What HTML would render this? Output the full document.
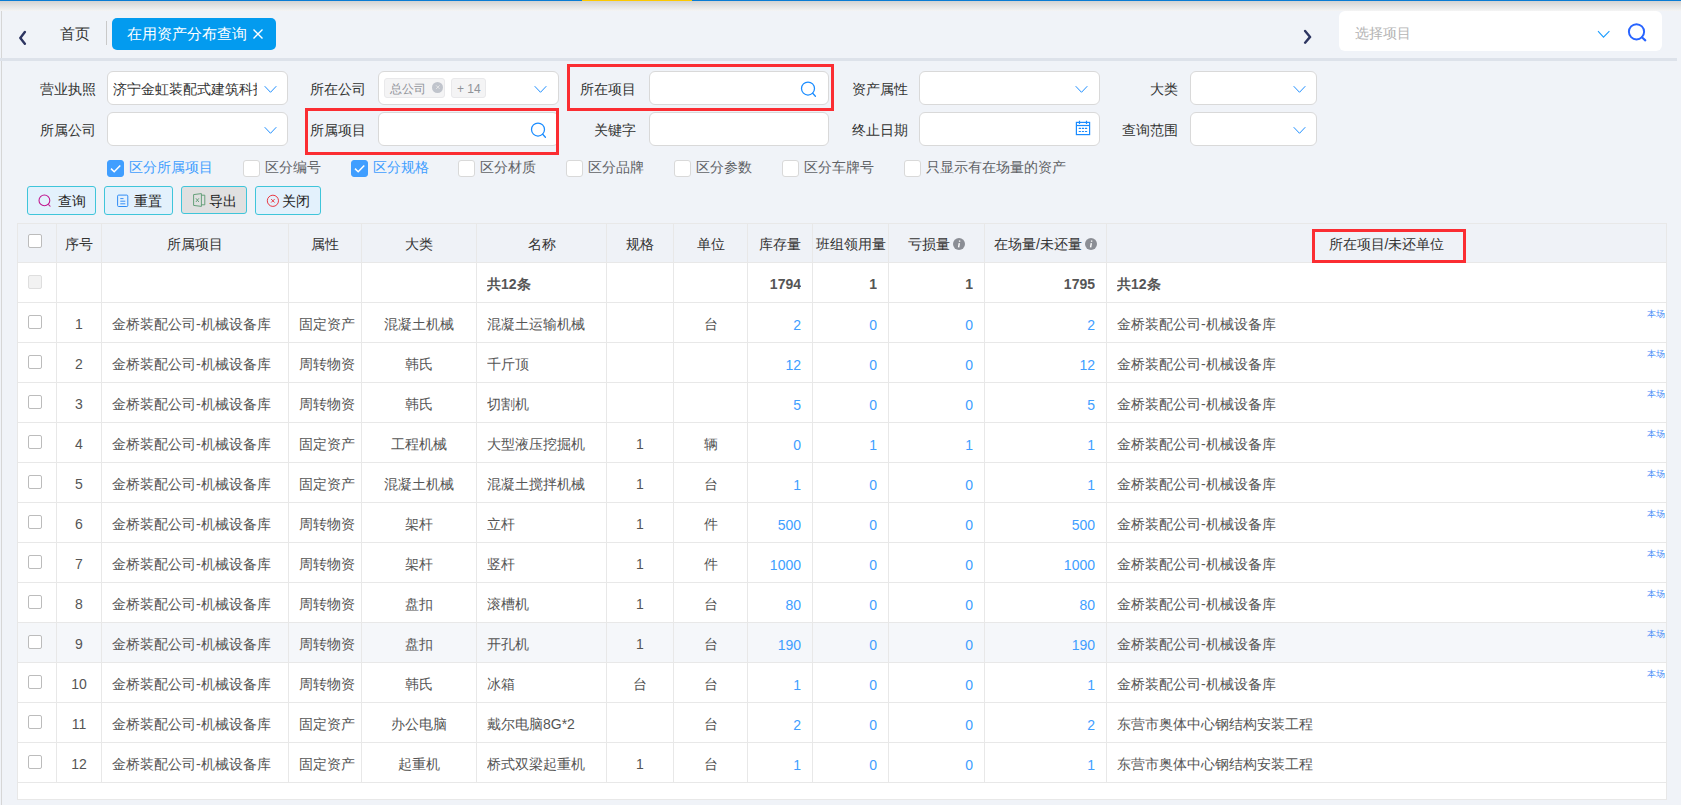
<!DOCTYPE html><html><head><meta charset="utf-8"><style>
*{box-sizing:border-box;margin:0;padding:0}
html,body{width:1681px;height:805px;overflow:hidden;background:#f0f3f8;font-family:"Liberation Sans",sans-serif;font-size:14px;color:#333}
.abs{position:absolute}
.lbl{position:absolute;height:34px;line-height:36px;text-align:right;color:#333;font-size:14px;white-space:nowrap}
.inp{position:absolute;height:34px;background:#fff;border:1px solid #d9d9d9;border-radius:6px}
.chev{position:absolute;width:13px;height:8px}
.cb{position:absolute;width:17px;height:17px;border:1px solid #d9d9d9;border-radius:3px;background:#fff}
.cbon{background:#409eff;border-color:#409eff}
.cbt{position:absolute;font-size:14px;line-height:16px;color:#606266;white-space:nowrap}
.btn{position:absolute;height:29px;border:1px solid #3fc5da;border-radius:3px;background:#e3f1fc;font-size:14px;line-height:27px;color:#333;white-space:nowrap}
.vl{position:absolute;width:1px;background:#e8e8e8}
.hl{position:absolute;height:1px;background:#e8e8e8}
.c{position:absolute;height:40px;line-height:44px;font-size:14px;color:#555;white-space:nowrap;overflow:hidden}
.ct{text-align:center}
.cr{text-align:right}
.cl{text-align:left}
.num{color:#409eff;padding-top:1px}
.tcb{position:absolute;width:14px;height:14px;border:1px solid #bcbcbc;border-radius:2px;background:#fff}
.bc{position:absolute;font-size:9px;line-height:10px;color:#4a8cf7;white-space:nowrap}
.red{position:absolute;border:3px solid #fb2d32}
</style></head><body>
<div class="abs" style="left:0;top:0;width:1681px;height:1px;background:#0a7bd3"></div>
<div class="abs" style="left:582px;top:0;width:110px;height:1px;background:#fcc800"></div>
<div class="abs" style="left:0;top:1px;width:1681px;height:10px;background:linear-gradient(#d3d3d3,#f4f4f4)"></div>
<div class="abs" style="left:1px;top:11px;width:1px;height:794px;background:#d6d6d6"></div>
<div class="abs" style="left:0;top:58px;width:1677px;height:3px;background:#dde2ea"></div>
<svg class="abs" style="left:17px;top:29px" width="12" height="16" viewBox="0 0 12 16"><path d="M7.85 2.9 L3.3 8.9 L7.85 14.7" fill="none" stroke="#2d3561" stroke-width="2.4" stroke-linecap="round" stroke-linejoin="round"/></svg>
<div class="abs" style="left:59.5px;top:23.5px;font-size:14.6px;line-height:20px;color:#333">首页</div>
<div class="abs" style="left:106px;top:21px;width:1px;height:24px;background:#c9c9c9"></div>
<div class="abs" style="left:112px;top:18px;width:164px;height:32px;background:#039bef;border-radius:5px"></div>
<div class="abs" style="left:127px;top:24px;font-size:15px;line-height:20px;color:#fff">在用资产分布查询</div>
<svg class="abs" style="left:252px;top:28px" width="12" height="12" viewBox="0 0 12 12"><path d="M1.5 1.5 L10.5 10.5 M10.5 1.5 L1.5 10.5" stroke="#fff" stroke-width="1.4"/></svg>
<svg class="abs" style="left:1300px;top:28px" width="12" height="16" viewBox="0 0 12 16"><path d="M5.1 2.9 L10.1 8.9 L5.1 14.7" fill="none" stroke="#2d3561" stroke-width="2.4" stroke-linecap="round" stroke-linejoin="round"/></svg>
<div class="abs" style="left:1339px;top:11px;width:323px;height:40px;background:#fff;border-radius:6px"></div>
<div class="abs" style="left:1355px;top:23px;font-size:14px;line-height:20px;color:#b4b4b4">选择项目</div>
<svg class="abs" style="left:1597px;top:29px" width="14" height="10" viewBox="0 0 14 10"><path d="M1 2.2 L6.5 8.2 L12.4 2.2" fill="none" stroke="#1a9cff" stroke-width="1.05"/></svg>
<svg class="abs" style="left:1626px;top:22px" width="22" height="22" viewBox="0 0 22 22"><circle cx="10.5" cy="9.8" r="7.6" fill="none" stroke="#2864ff" stroke-width="1.95"/><path d="M15.9 15.3 L19.3 18.4" stroke="#2864ff" stroke-width="2.1" stroke-linecap="round"/></svg>
<div class="lbl" style="left:-24px;top:71px;width:120px">营业执照</div>
<div class="lbl" style="left:246px;top:71px;width:120px">所在公司</div>
<div class="lbl" style="left:516px;top:71px;width:120px">所在项目</div>
<div class="lbl" style="left:788px;top:71px;width:120px">资产属性</div>
<div class="lbl" style="left:1058px;top:71px;width:120px">大类</div>
<div class="lbl" style="left:-24px;top:112px;width:120px">所属公司</div>
<div class="lbl" style="left:246px;top:112px;width:120px">所属项目</div>
<div class="lbl" style="left:516px;top:112px;width:120px">关键字</div>
<div class="lbl" style="left:788px;top:112px;width:120px">终止日期</div>
<div class="lbl" style="left:1058px;top:112px;width:120px">查询范围</div>
<div class="inp" style="left:107px;top:71px;width:181px"></div>
<div class="inp" style="left:378px;top:71px;width:181px"></div>
<div class="inp" style="left:649px;top:71px;width:180px"></div>
<div class="inp" style="left:919px;top:71px;width:181px"></div>
<div class="inp" style="left:1190px;top:71px;width:127px"></div>
<div class="inp" style="left:107px;top:112px;width:181px"></div>
<div class="inp" style="left:378px;top:112px;width:181px"></div>
<div class="inp" style="left:649px;top:112px;width:180px"></div>
<div class="inp" style="left:919px;top:112px;width:181px"></div>
<div class="inp" style="left:1190px;top:112px;width:127px"></div>
<div class="abs" style="left:113px;top:71px;width:144px;height:34px;line-height:36px;overflow:hidden;white-space:nowrap;color:#333">济宁金虹装配式建筑科技有限公司</div>
<svg class="abs" style="left:264px;top:85px" width="14" height="10" viewBox="0 0 14 10"><path d="M0.7 1.2 L6.5 7.3 L12.3 1.2" fill="none" stroke="#1f8fff" stroke-width="1.0"/></svg>
<svg class="abs" style="left:534px;top:85px" width="14" height="10" viewBox="0 0 14 10"><path d="M0.7 1.2 L6.5 7.3 L12.3 1.2" fill="none" stroke="#1f8fff" stroke-width="1.0"/></svg>
<svg class="abs" style="left:1075px;top:85px" width="14" height="10" viewBox="0 0 14 10"><path d="M0.7 1.2 L6.5 7.3 L12.3 1.2" fill="none" stroke="#1f8fff" stroke-width="1.0"/></svg>
<svg class="abs" style="left:1293px;top:85px" width="14" height="10" viewBox="0 0 14 10"><path d="M0.7 1.2 L6.5 7.3 L12.3 1.2" fill="none" stroke="#1f8fff" stroke-width="1.0"/></svg>
<svg class="abs" style="left:264px;top:126px" width="14" height="10" viewBox="0 0 14 10"><path d="M0.7 1.2 L6.5 7.3 L12.3 1.2" fill="none" stroke="#1f8fff" stroke-width="1.0"/></svg>
<svg class="abs" style="left:1293px;top:126px" width="14" height="10" viewBox="0 0 14 10"><path d="M0.7 1.2 L6.5 7.3 L12.3 1.2" fill="none" stroke="#1f8fff" stroke-width="1.0"/></svg>
<div class="abs" style="left:384px;top:78px;width:61px;height:20px;background:#f4f4f5;border:1px solid #e9e9eb;border-radius:3px"></div>
<div class="abs" style="left:390px;top:80px;font-size:12px;line-height:18px;color:#909399">总公司</div>
<div class="abs" style="left:432.3px;top:81.6px;width:11px;height:11px;border-radius:50%;background:#c0c4cc"></div>
<svg class="abs" style="left:432px;top:81px" width="12" height="12" viewBox="0 0 12 12"><path d="M4.1 4.4 L7.6 7.9 M7.6 4.4 L4.1 7.9" stroke="#eeeeee" stroke-width="0.8"/></svg>
<div class="abs" style="left:451px;top:78px;width:35px;height:20px;background:#f4f4f5;border:1px solid #e9e9eb;border-radius:3px"></div>
<div class="abs" style="left:457px;top:80px;font-size:12px;line-height:18px;color:#909399">+ 14</div>
<svg class="abs" style="left:530px;top:122px" width="18" height="18" viewBox="0 0 18 18"><circle cx="8" cy="7.5" r="6.5" fill="none" stroke="#1a8cff" stroke-width="1.25"/><path d="M12.7 12.3 L15.4 15.2" stroke="#1a8cff" stroke-width="1.3" stroke-linecap="round"/></svg>
<svg class="abs" style="left:800px;top:81px" width="18" height="18" viewBox="0 0 18 18"><circle cx="8" cy="7.5" r="6.5" fill="none" stroke="#1a8cff" stroke-width="1.25"/><path d="M12.7 12.3 L15.4 15.2" stroke="#1a8cff" stroke-width="1.3" stroke-linecap="round"/></svg>
<svg class="abs" style="left:1075px;top:120px" width="16" height="16" viewBox="0 0 16 16"><rect x="1.4" y="2.4" width="13.2" height="12.2" fill="none" stroke="#1a8cff" stroke-width="1.2"/><path d="M1.4 5.5 H14.6" stroke="#1a8cff" stroke-width="1.2"/><path d="M4.5 0.8 V4 M11.5 0.8 V4" stroke="#1a8cff" stroke-width="1.2"/><path d="M4.2 8.4 H5.5 M7.3 8.4 H8.6 M10.4 8.4 H11.7 M4.2 11.5 H5.5 M7.3 11.5 H8.6 M10.4 11.5 H11.7" stroke="#1a8cff" stroke-width="1.1" stroke-linecap="round"/></svg>
<div class="red" style="left:567px;top:64px;width:267px;height:47px"></div>
<div class="red" style="left:305px;top:108px;width:254px;height:47px"></div>
<div class="cb cbon" style="left:107px;top:160px"></div>
<svg class="abs" style="left:107px;top:160px" width="17" height="17" viewBox="0 0 17 17"><path d="M4 8.6 L7.2 11.8 L13.3 5.5" fill="none" stroke="#fff" stroke-width="1.5"/></svg>
<div class="cbt" style="left:129px;top:159px;color:#409eff">区分所属项目</div>
<div class="cb" style="left:243px;top:160px"></div>
<div class="cbt" style="left:265px;top:159px;color:#606266">区分编号</div>
<div class="cb cbon" style="left:351px;top:160px"></div>
<svg class="abs" style="left:351px;top:160px" width="17" height="17" viewBox="0 0 17 17"><path d="M4 8.6 L7.2 11.8 L13.3 5.5" fill="none" stroke="#fff" stroke-width="1.5"/></svg>
<div class="cbt" style="left:373px;top:159px;color:#409eff">区分规格</div>
<div class="cb" style="left:458px;top:160px"></div>
<div class="cbt" style="left:480px;top:159px;color:#606266">区分材质</div>
<div class="cb" style="left:566px;top:160px"></div>
<div class="cbt" style="left:588px;top:159px;color:#606266">区分品牌</div>
<div class="cb" style="left:674px;top:160px"></div>
<div class="cbt" style="left:696px;top:159px;color:#606266">区分参数</div>
<div class="cb" style="left:782px;top:160px"></div>
<div class="cbt" style="left:804px;top:159px;color:#606266">区分车牌号</div>
<div class="cb" style="left:904px;top:160px"></div>
<div class="cbt" style="left:926px;top:159px;color:#606266">只显示有在场量的资产</div>
<div class="btn" style="left:27px;top:186px;width:69px;height:29px;background:#e3f1fc"></div>
<div class="btn" style="left:104px;top:186px;width:69px;height:29px;background:#e3f1fc"></div>
<div class="btn" style="left:181px;top:186px;width:66px;height:28px;background:#e0e0e0"></div>
<div class="btn" style="left:255px;top:186px;width:66px;height:29px;background:#e3f1fc"></div>
<svg class="abs" style="left:38px;top:194px" width="14" height="14" viewBox="0 0 14 14"><circle cx="6.4" cy="6.4" r="5.4" fill="none" stroke="#c0168f" stroke-width="1.05"/><path d="M10.3 10.3 L12.4 12.5" stroke="#c0168f" stroke-width="1.05"/></svg>
<div class="abs" style="left:58px;top:192px;line-height:18px;color:#222">查询</div>
<svg class="abs" style="left:117px;top:194px" width="12" height="14" viewBox="0 0 12 14"><rect x="0.6" y="1.1" width="10.2" height="11.4" rx="1" fill="none" stroke="#2f8cf5" stroke-width="1"/><path d="M3.3 4.6 H6.5 M3.3 7.2 H8.3 M3.3 9.8 H8.3" stroke="#2f8cf5" stroke-width="0.95"/></svg>
<div class="abs" style="left:134px;top:192px;line-height:18px;color:#222">重置</div>
<svg class="abs" style="left:193px;top:193px" width="13" height="14" viewBox="0 0 13 14"><path d="M0.6 1.6 L8.4 0.6 V13.4 L0.6 12.4 Z" fill="none" stroke="#5f9c74" stroke-width="0.95"/><path d="M8.4 2.2 H11.8 V11.8 H8.4" fill="none" stroke="#5f9c74" stroke-width="0.95"/><path d="M2.9 5.3 L5.9 9 M5.9 5.3 L2.9 9" stroke="#5f9c74" stroke-width="0.9"/></svg>
<div class="abs" style="left:209px;top:192px;line-height:18px;color:#222">导出</div>
<svg class="abs" style="left:266px;top:194px" width="14" height="14" viewBox="0 0 14 14"><circle cx="6.9" cy="6.8" r="5.6" fill="none" stroke="#ea3a44" stroke-width="1"/><path d="M5.2 5.1 L8.6 8.5 M8.6 5.1 L5.2 8.5" stroke="#ea3a44" stroke-width="1"/></svg>
<div class="abs" style="left:282px;top:192px;line-height:18px;color:#222">关闭</div>
<div class="abs" style="left:17px;top:223px;width:1650px;height:577px;background:#fff;border:1px solid #e8e8e8"></div>
<div class="abs" style="left:18px;top:224px;width:1648px;height:38px;background:#eff2f7"></div>
<div class="abs" style="left:18px;top:622px;width:1648px;height:40px;background:#f5f7fa"></div>
<div class="hl" style="left:17px;top:262px;width:1649px"></div>
<div class="hl" style="left:17px;top:302px;width:1649px"></div>
<div class="hl" style="left:17px;top:342px;width:1649px"></div>
<div class="hl" style="left:17px;top:382px;width:1649px"></div>
<div class="hl" style="left:17px;top:422px;width:1649px"></div>
<div class="hl" style="left:17px;top:462px;width:1649px"></div>
<div class="hl" style="left:17px;top:502px;width:1649px"></div>
<div class="hl" style="left:17px;top:542px;width:1649px"></div>
<div class="hl" style="left:17px;top:582px;width:1649px"></div>
<div class="hl" style="left:17px;top:622px;width:1649px"></div>
<div class="hl" style="left:17px;top:662px;width:1649px"></div>
<div class="hl" style="left:17px;top:702px;width:1649px"></div>
<div class="hl" style="left:17px;top:742px;width:1649px"></div>
<div class="hl" style="left:17px;top:782px;width:1649px"></div>
<div class="vl" style="left:56px;top:223px;height:559px"></div>
<div class="vl" style="left:101px;top:223px;height:559px"></div>
<div class="vl" style="left:288px;top:223px;height:559px"></div>
<div class="vl" style="left:361px;top:223px;height:559px"></div>
<div class="vl" style="left:476px;top:223px;height:559px"></div>
<div class="vl" style="left:606px;top:223px;height:559px"></div>
<div class="vl" style="left:673px;top:223px;height:559px"></div>
<div class="vl" style="left:747px;top:223px;height:559px"></div>
<div class="vl" style="left:812px;top:223px;height:559px"></div>
<div class="vl" style="left:888px;top:223px;height:559px"></div>
<div class="vl" style="left:984px;top:223px;height:559px"></div>
<div class="vl" style="left:1106px;top:223px;height:559px"></div>
<div class="c ct " style="left:57px;top:223px;width:44px;color:#333;height:39px;line-height:43px">序号</div>
<div class="c ct " style="left:102px;top:223px;width:186px;color:#333;height:39px;line-height:43px">所属项目</div>
<div class="c ct " style="left:289px;top:223px;width:72px;color:#333;height:39px;line-height:43px">属性</div>
<div class="c ct " style="left:362px;top:223px;width:114px;color:#333;height:39px;line-height:43px">大类</div>
<div class="c ct " style="left:477px;top:223px;width:129px;color:#333;height:39px;line-height:43px">名称</div>
<div class="c ct " style="left:607px;top:223px;width:66px;color:#333;height:39px;line-height:43px">规格</div>
<div class="c ct " style="left:674px;top:223px;width:73px;color:#333;height:39px;line-height:43px">单位</div>
<div class="c ct " style="left:748px;top:223px;width:64px;color:#333;height:39px;line-height:43px">库存量</div>
<div class="c ct " style="left:813px;top:223px;width:75px;color:#333;height:39px;line-height:43px">班组领用量</div>
<div class="c ct " style="left:889px;top:223px;width:95px;color:#333;height:39px;line-height:43px">亏损量<svg width="12" height="12" viewBox="0 0 12 12" style="vertical-align:-1px;margin-left:3px"><circle cx="6" cy="6" r="6" fill="#8b8e95"/><path d="M6.6 2.6 v1.2 M6.3 5.2 L5.6 9.4" stroke="#fff" stroke-width="1.4"/></svg></div>
<div class="c ct " style="left:985px;top:223px;width:121px;color:#333;height:39px;line-height:43px">在场量/未还量<svg width="12" height="12" viewBox="0 0 12 12" style="vertical-align:-1px;margin-left:3px"><circle cx="6" cy="6" r="6" fill="#8b8e95"/><path d="M6.6 2.6 v1.2 M6.3 5.2 L5.6 9.4" stroke="#fff" stroke-width="1.4"/></svg></div>
<div class="c ct " style="left:1107px;top:223px;width:559px;color:#333;height:39px;line-height:43px">所在项目/未还单位</div>
<div class="tcb" style="left:28px;top:234px"></div>
<div class="tcb" style="left:28px;top:275px;background:#f2f2f2;border-color:#dedede"></div>
<div class="c cl " style="left:487px;top:262px;width:119px;color:#555"><b>共12条</b></div>
<div class="c cr " style="left:748px;top:262px;width:53px;color:#555"><b>1794</b></div>
<div class="c cr " style="left:813px;top:262px;width:64px;color:#555"><b>1</b></div>
<div class="c cr " style="left:889px;top:262px;width:84px;color:#555"><b>1</b></div>
<div class="c cr " style="left:985px;top:262px;width:110px;color:#555"><b>1795</b></div>
<div class="c cl " style="left:1117px;top:262px;width:549px;color:#555"><b>共12条</b></div>
<div class="tcb" style="left:28px;top:315px"></div>
<div class="c ct " style="left:57px;top:302px;width:44px;">1</div>
<div class="c cl " style="left:112px;top:302px;width:176px;">金桥装配公司-机械设备库</div>
<div class="c cl " style="left:299px;top:302px;width:62px;">固定资产</div>
<div class="c ct " style="left:362px;top:302px;width:114px;">混凝土机械</div>
<div class="c cl " style="left:487px;top:302px;width:119px;">混凝土运输机械</div>
<div class="c ct " style="left:607px;top:302px;width:66px;"></div>
<div class="c ct " style="left:674px;top:302px;width:73px;">台</div>
<div class="c cr num" style="left:748px;top:302px;width:53px;">2</div>
<div class="c cr num" style="left:813px;top:302px;width:64px;">0</div>
<div class="c cr num" style="left:889px;top:302px;width:84px;">0</div>
<div class="c cr num" style="left:985px;top:302px;width:110px;">2</div>
<div class="c cl " style="left:1117px;top:302px;width:549px;">金桥装配公司-机械设备库</div>
<div class="bc" style="left:1647px;top:309px;width:19px;overflow:hidden">本场</div>
<div class="tcb" style="left:28px;top:355px"></div>
<div class="c ct " style="left:57px;top:342px;width:44px;">2</div>
<div class="c cl " style="left:112px;top:342px;width:176px;">金桥装配公司-机械设备库</div>
<div class="c cl " style="left:299px;top:342px;width:62px;">周转物资</div>
<div class="c ct " style="left:362px;top:342px;width:114px;">韩氏</div>
<div class="c cl " style="left:487px;top:342px;width:119px;">千斤顶</div>
<div class="c ct " style="left:607px;top:342px;width:66px;"></div>
<div class="c ct " style="left:674px;top:342px;width:73px;"></div>
<div class="c cr num" style="left:748px;top:342px;width:53px;">12</div>
<div class="c cr num" style="left:813px;top:342px;width:64px;">0</div>
<div class="c cr num" style="left:889px;top:342px;width:84px;">0</div>
<div class="c cr num" style="left:985px;top:342px;width:110px;">12</div>
<div class="c cl " style="left:1117px;top:342px;width:549px;">金桥装配公司-机械设备库</div>
<div class="bc" style="left:1647px;top:349px;width:19px;overflow:hidden">本场</div>
<div class="tcb" style="left:28px;top:395px"></div>
<div class="c ct " style="left:57px;top:382px;width:44px;">3</div>
<div class="c cl " style="left:112px;top:382px;width:176px;">金桥装配公司-机械设备库</div>
<div class="c cl " style="left:299px;top:382px;width:62px;">周转物资</div>
<div class="c ct " style="left:362px;top:382px;width:114px;">韩氏</div>
<div class="c cl " style="left:487px;top:382px;width:119px;">切割机</div>
<div class="c ct " style="left:607px;top:382px;width:66px;"></div>
<div class="c ct " style="left:674px;top:382px;width:73px;"></div>
<div class="c cr num" style="left:748px;top:382px;width:53px;">5</div>
<div class="c cr num" style="left:813px;top:382px;width:64px;">0</div>
<div class="c cr num" style="left:889px;top:382px;width:84px;">0</div>
<div class="c cr num" style="left:985px;top:382px;width:110px;">5</div>
<div class="c cl " style="left:1117px;top:382px;width:549px;">金桥装配公司-机械设备库</div>
<div class="bc" style="left:1647px;top:389px;width:19px;overflow:hidden">本场</div>
<div class="tcb" style="left:28px;top:435px"></div>
<div class="c ct " style="left:57px;top:422px;width:44px;">4</div>
<div class="c cl " style="left:112px;top:422px;width:176px;">金桥装配公司-机械设备库</div>
<div class="c cl " style="left:299px;top:422px;width:62px;">固定资产</div>
<div class="c ct " style="left:362px;top:422px;width:114px;">工程机械</div>
<div class="c cl " style="left:487px;top:422px;width:119px;">大型液压挖掘机</div>
<div class="c ct " style="left:607px;top:422px;width:66px;">1</div>
<div class="c ct " style="left:674px;top:422px;width:73px;">辆</div>
<div class="c cr num" style="left:748px;top:422px;width:53px;">0</div>
<div class="c cr num" style="left:813px;top:422px;width:64px;">1</div>
<div class="c cr num" style="left:889px;top:422px;width:84px;">1</div>
<div class="c cr num" style="left:985px;top:422px;width:110px;">1</div>
<div class="c cl " style="left:1117px;top:422px;width:549px;">金桥装配公司-机械设备库</div>
<div class="bc" style="left:1647px;top:429px;width:19px;overflow:hidden">本场</div>
<div class="tcb" style="left:28px;top:475px"></div>
<div class="c ct " style="left:57px;top:462px;width:44px;">5</div>
<div class="c cl " style="left:112px;top:462px;width:176px;">金桥装配公司-机械设备库</div>
<div class="c cl " style="left:299px;top:462px;width:62px;">固定资产</div>
<div class="c ct " style="left:362px;top:462px;width:114px;">混凝土机械</div>
<div class="c cl " style="left:487px;top:462px;width:119px;">混凝土搅拌机械</div>
<div class="c ct " style="left:607px;top:462px;width:66px;">1</div>
<div class="c ct " style="left:674px;top:462px;width:73px;">台</div>
<div class="c cr num" style="left:748px;top:462px;width:53px;">1</div>
<div class="c cr num" style="left:813px;top:462px;width:64px;">0</div>
<div class="c cr num" style="left:889px;top:462px;width:84px;">0</div>
<div class="c cr num" style="left:985px;top:462px;width:110px;">1</div>
<div class="c cl " style="left:1117px;top:462px;width:549px;">金桥装配公司-机械设备库</div>
<div class="bc" style="left:1647px;top:469px;width:19px;overflow:hidden">本场</div>
<div class="tcb" style="left:28px;top:515px"></div>
<div class="c ct " style="left:57px;top:502px;width:44px;">6</div>
<div class="c cl " style="left:112px;top:502px;width:176px;">金桥装配公司-机械设备库</div>
<div class="c cl " style="left:299px;top:502px;width:62px;">周转物资</div>
<div class="c ct " style="left:362px;top:502px;width:114px;">架杆</div>
<div class="c cl " style="left:487px;top:502px;width:119px;">立杆</div>
<div class="c ct " style="left:607px;top:502px;width:66px;">1</div>
<div class="c ct " style="left:674px;top:502px;width:73px;">件</div>
<div class="c cr num" style="left:748px;top:502px;width:53px;">500</div>
<div class="c cr num" style="left:813px;top:502px;width:64px;">0</div>
<div class="c cr num" style="left:889px;top:502px;width:84px;">0</div>
<div class="c cr num" style="left:985px;top:502px;width:110px;">500</div>
<div class="c cl " style="left:1117px;top:502px;width:549px;">金桥装配公司-机械设备库</div>
<div class="bc" style="left:1647px;top:509px;width:19px;overflow:hidden">本场</div>
<div class="tcb" style="left:28px;top:555px"></div>
<div class="c ct " style="left:57px;top:542px;width:44px;">7</div>
<div class="c cl " style="left:112px;top:542px;width:176px;">金桥装配公司-机械设备库</div>
<div class="c cl " style="left:299px;top:542px;width:62px;">周转物资</div>
<div class="c ct " style="left:362px;top:542px;width:114px;">架杆</div>
<div class="c cl " style="left:487px;top:542px;width:119px;">竖杆</div>
<div class="c ct " style="left:607px;top:542px;width:66px;">1</div>
<div class="c ct " style="left:674px;top:542px;width:73px;">件</div>
<div class="c cr num" style="left:748px;top:542px;width:53px;">1000</div>
<div class="c cr num" style="left:813px;top:542px;width:64px;">0</div>
<div class="c cr num" style="left:889px;top:542px;width:84px;">0</div>
<div class="c cr num" style="left:985px;top:542px;width:110px;">1000</div>
<div class="c cl " style="left:1117px;top:542px;width:549px;">金桥装配公司-机械设备库</div>
<div class="bc" style="left:1647px;top:549px;width:19px;overflow:hidden">本场</div>
<div class="tcb" style="left:28px;top:595px"></div>
<div class="c ct " style="left:57px;top:582px;width:44px;">8</div>
<div class="c cl " style="left:112px;top:582px;width:176px;">金桥装配公司-机械设备库</div>
<div class="c cl " style="left:299px;top:582px;width:62px;">周转物资</div>
<div class="c ct " style="left:362px;top:582px;width:114px;">盘扣</div>
<div class="c cl " style="left:487px;top:582px;width:119px;">滚槽机</div>
<div class="c ct " style="left:607px;top:582px;width:66px;">1</div>
<div class="c ct " style="left:674px;top:582px;width:73px;">台</div>
<div class="c cr num" style="left:748px;top:582px;width:53px;">80</div>
<div class="c cr num" style="left:813px;top:582px;width:64px;">0</div>
<div class="c cr num" style="left:889px;top:582px;width:84px;">0</div>
<div class="c cr num" style="left:985px;top:582px;width:110px;">80</div>
<div class="c cl " style="left:1117px;top:582px;width:549px;">金桥装配公司-机械设备库</div>
<div class="bc" style="left:1647px;top:589px;width:19px;overflow:hidden">本场</div>
<div class="tcb" style="left:28px;top:635px"></div>
<div class="c ct " style="left:57px;top:622px;width:44px;">9</div>
<div class="c cl " style="left:112px;top:622px;width:176px;">金桥装配公司-机械设备库</div>
<div class="c cl " style="left:299px;top:622px;width:62px;">周转物资</div>
<div class="c ct " style="left:362px;top:622px;width:114px;">盘扣</div>
<div class="c cl " style="left:487px;top:622px;width:119px;">开孔机</div>
<div class="c ct " style="left:607px;top:622px;width:66px;">1</div>
<div class="c ct " style="left:674px;top:622px;width:73px;">台</div>
<div class="c cr num" style="left:748px;top:622px;width:53px;">190</div>
<div class="c cr num" style="left:813px;top:622px;width:64px;">0</div>
<div class="c cr num" style="left:889px;top:622px;width:84px;">0</div>
<div class="c cr num" style="left:985px;top:622px;width:110px;">190</div>
<div class="c cl " style="left:1117px;top:622px;width:549px;">金桥装配公司-机械设备库</div>
<div class="bc" style="left:1647px;top:629px;width:19px;overflow:hidden">本场</div>
<div class="tcb" style="left:28px;top:675px"></div>
<div class="c ct " style="left:57px;top:662px;width:44px;">10</div>
<div class="c cl " style="left:112px;top:662px;width:176px;">金桥装配公司-机械设备库</div>
<div class="c cl " style="left:299px;top:662px;width:62px;">周转物资</div>
<div class="c ct " style="left:362px;top:662px;width:114px;">韩氏</div>
<div class="c cl " style="left:487px;top:662px;width:119px;">冰箱</div>
<div class="c ct " style="left:607px;top:662px;width:66px;">台</div>
<div class="c ct " style="left:674px;top:662px;width:73px;">台</div>
<div class="c cr num" style="left:748px;top:662px;width:53px;">1</div>
<div class="c cr num" style="left:813px;top:662px;width:64px;">0</div>
<div class="c cr num" style="left:889px;top:662px;width:84px;">0</div>
<div class="c cr num" style="left:985px;top:662px;width:110px;">1</div>
<div class="c cl " style="left:1117px;top:662px;width:549px;">金桥装配公司-机械设备库</div>
<div class="bc" style="left:1647px;top:669px;width:19px;overflow:hidden">本场</div>
<div class="tcb" style="left:28px;top:715px"></div>
<div class="c ct " style="left:57px;top:702px;width:44px;">11</div>
<div class="c cl " style="left:112px;top:702px;width:176px;">金桥装配公司-机械设备库</div>
<div class="c cl " style="left:299px;top:702px;width:62px;">固定资产</div>
<div class="c ct " style="left:362px;top:702px;width:114px;">办公电脑</div>
<div class="c cl " style="left:487px;top:702px;width:119px;">戴尔电脑8G*2</div>
<div class="c ct " style="left:607px;top:702px;width:66px;"></div>
<div class="c ct " style="left:674px;top:702px;width:73px;">台</div>
<div class="c cr num" style="left:748px;top:702px;width:53px;">2</div>
<div class="c cr num" style="left:813px;top:702px;width:64px;">0</div>
<div class="c cr num" style="left:889px;top:702px;width:84px;">0</div>
<div class="c cr num" style="left:985px;top:702px;width:110px;">2</div>
<div class="c cl " style="left:1117px;top:702px;width:549px;">东营市奥体中心钢结构安装工程</div>
<div class="tcb" style="left:28px;top:755px"></div>
<div class="c ct " style="left:57px;top:742px;width:44px;">12</div>
<div class="c cl " style="left:112px;top:742px;width:176px;">金桥装配公司-机械设备库</div>
<div class="c cl " style="left:299px;top:742px;width:62px;">固定资产</div>
<div class="c ct " style="left:362px;top:742px;width:114px;">起重机</div>
<div class="c cl " style="left:487px;top:742px;width:119px;">桥式双梁起重机</div>
<div class="c ct " style="left:607px;top:742px;width:66px;">1</div>
<div class="c ct " style="left:674px;top:742px;width:73px;">台</div>
<div class="c cr num" style="left:748px;top:742px;width:53px;">1</div>
<div class="c cr num" style="left:813px;top:742px;width:64px;">0</div>
<div class="c cr num" style="left:889px;top:742px;width:84px;">0</div>
<div class="c cr num" style="left:985px;top:742px;width:110px;">1</div>
<div class="c cl " style="left:1117px;top:742px;width:549px;">东营市奥体中心钢结构安装工程</div>
<div class="red" style="left:1312px;top:229px;width:154px;height:34px"></div>
</body></html>
